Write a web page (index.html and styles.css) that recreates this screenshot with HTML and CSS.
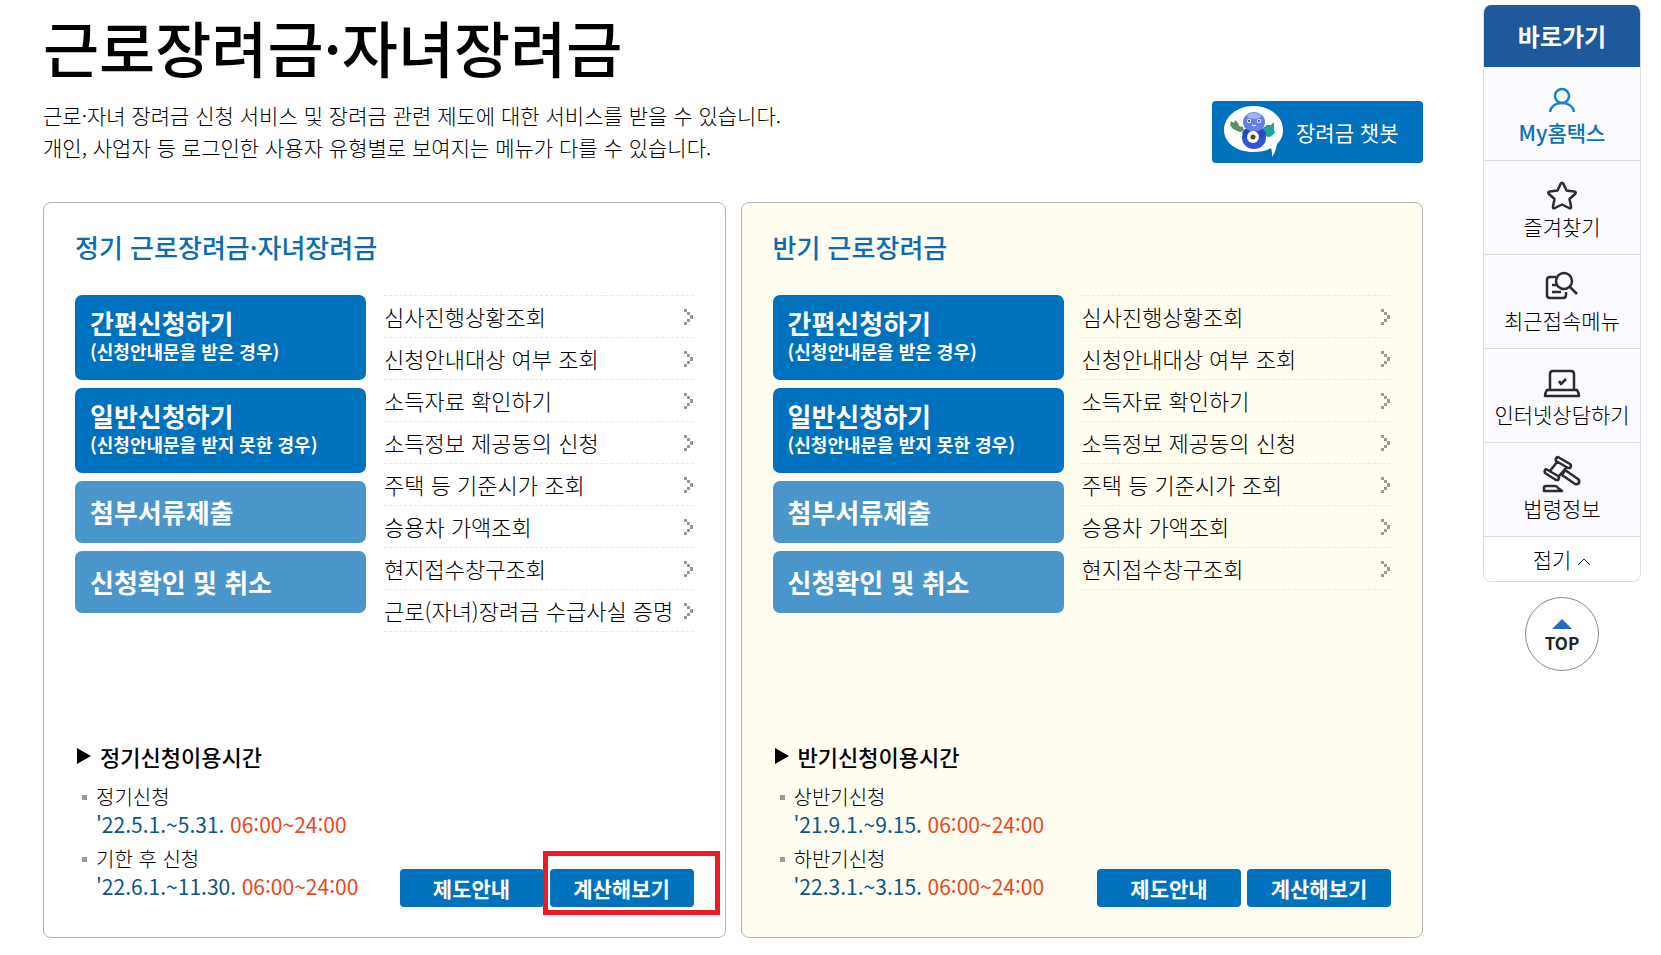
FILE: index.html
```html
<!DOCTYPE html>
<html lang="ko">
<head>
	<meta charset="utf-8">
	<meta name="viewport" content="width=device-width, initial-scale=1">
	<title>근로장려금·자녀장려금</title>
	<link rel="stylesheet" href="styles.css">
</head>
<body>
	<!-- Shared arrow icon -->
	<svg class="defs" width="0" height="0" aria-hidden="true">
		<symbol id="arrow" viewBox="0 0 10 16">
			<path d="M0 0h3v3H0zM3 3h3v3H3zM6 6h3v4H6zM3 10h3v3H3zM0 13h3v3H0z"/>
		</symbol>
	</svg>

	<div class="page">
		<main class="main">
			<h1>근로장려금·자녀장려금</h1>
			<div class="intro">
				<p>근로·자녀 장려금 신청 서비스 및 장려금 관련 제도에 대한 서비스를 받을 수 있습니다.<br>개인, 사업자 등 로그인한 사용자 유형별로 보여지는 메뉴가 다를 수 있습니다.</p>
				<button type="button" class="chatbot-btn">
					<svg width="60" height="52" viewBox="0 0 60 52" aria-hidden="true">
						<path d="M29 0C46 0 59 10 59 24c0 6-2 10-6 14-1 5-2 9-5 13 0-4 0-6-1-9-5 3-11 4-18 4C13 46 0 37 0 24S13 0 29 0z" fill="#fff"/>
						<path d="M7 15l3 2 1-3 3 3 1 3 4 1 1 4-4 1-7-3-3-4z" fill="#5f8f5a"/>
						<path d="M36 24l7-5 4 0 3-3 0 7 1 4-5 4-8-1z" fill="#1fa39a"/>
						<ellipse cx="30" cy="32" rx="12" ry="11" fill="#3252d8"/>
						<path d="M18 27l3-4h18l3 4-4 5H21z" fill="#2947bd"/>
						<ellipse cx="30" cy="16" rx="11" ry="10" fill="#6480e6"/>
						<ellipse cx="30" cy="10" rx="7" ry="3" fill="#9fb2f7"/>
						<circle cx="25" cy="15" r="2" fill="#fff"/>
						<circle cx="35" cy="15" r="2" fill="#fff"/>
						<circle cx="25" cy="15" r="1" fill="#172a80"/>
						<circle cx="35" cy="15" r="1" fill="#172a80"/>
						<path d="M28 19q2 2 4 0" fill="none" stroke="#fff"/>
						<circle cx="29" cy="31" r="6" fill="#fff"/>
						<circle cx="29" cy="31" r="2.500" fill="#5b4330"/>
					</svg>
					장려금 챗봇
				</button>
			</div>

			<div class="panels">
				<section class="panel">
					<h2>정기 근로장려금·자녀장려금</h2>
					<div class="panel-body">
						<div class="apply">
							<button type="button" class="apply-btn">간편신청하기<small>(신청안내문을 받은 경우)</small></button>
							<button type="button" class="apply-btn">일반신청하기<small>(신청안내문을 받지 못한 경우)</small></button>
							<button type="button" class="apply-btn light">첨부서류제출</button>
							<button type="button" class="apply-btn light">신청확인 및 취소</button>
						</div>
						<ul class="links">
							<li><a href="#">심사진행상황조회<svg><use href="#arrow"/></svg></a></li>
							<li><a href="#">신청안내대상 여부 조회<svg><use href="#arrow"/></svg></a></li>
							<li><a href="#">소득자료 확인하기<svg><use href="#arrow"/></svg></a></li>
							<li><a href="#">소득정보 제공동의 신청<svg><use href="#arrow"/></svg></a></li>
							<li><a href="#">주택 등 기준시가 조회<svg><use href="#arrow"/></svg></a></li>
							<li><a href="#">승용차 가액조회<svg><use href="#arrow"/></svg></a></li>
							<li><a href="#">현지접수창구조회<svg><use href="#arrow"/></svg></a></li>
							<li><a href="#">근로(자녀)장려금 수급사실 증명<svg><use href="#arrow"/></svg></a></li>
						</ul>
					</div>
					<div class="panel-foot">
						<div class="times">
							<h3>정기신청이용시간</h3>
							<ul>
								<li>정기신청<br><span class="date">'22.5.1.~5.31.</span> <span class="hour">06:00~24:00</span></li>
								<li>기한 후 신청<br><span class="date">'22.6.1.~11.30.</span> <span class="hour">06:00~24:00</span></li>
							</ul>
						</div>
						<div class="foot-btns">
							<button type="button" class="foot-btn">제도안내</button>
							<button type="button" class="foot-btn marked">계산해보기</button>
						</div>
					</div>
				</section>

				<section class="panel half">
					<h2>반기 근로장려금</h2>
					<div class="panel-body">
						<div class="apply">
							<button type="button" class="apply-btn">간편신청하기<small>(신청안내문을 받은 경우)</small></button>
							<button type="button" class="apply-btn">일반신청하기<small>(신청안내문을 받지 못한 경우)</small></button>
							<button type="button" class="apply-btn light">첨부서류제출</button>
							<button type="button" class="apply-btn light">신청확인 및 취소</button>
						</div>
						<ul class="links">
							<li><a href="#">심사진행상황조회<svg><use href="#arrow"/></svg></a></li>
							<li><a href="#">신청안내대상 여부 조회<svg><use href="#arrow"/></svg></a></li>
							<li><a href="#">소득자료 확인하기<svg><use href="#arrow"/></svg></a></li>
							<li><a href="#">소득정보 제공동의 신청<svg><use href="#arrow"/></svg></a></li>
							<li><a href="#">주택 등 기준시가 조회<svg><use href="#arrow"/></svg></a></li>
							<li><a href="#">승용차 가액조회<svg><use href="#arrow"/></svg></a></li>
							<li><a href="#">현지접수창구조회<svg><use href="#arrow"/></svg></a></li>
						</ul>
					</div>
					<div class="panel-foot">
						<div class="times">
							<h3>반기신청이용시간</h3>
							<ul>
								<li>상반기신청<br><span class="date">'21.9.1.~9.15.</span> <span class="hour">06:00~24:00</span></li>
								<li>하반기신청<br><span class="date">'22.3.1.~3.15.</span> <span class="hour">06:00~24:00</span></li>
							</ul>
						</div>
						<div class="foot-btns">
							<button type="button" class="foot-btn">제도안내</button>
							<button type="button" class="foot-btn">계산해보기</button>
						</div>
					</div>
				</section>
			</div>
		</main>

		<!-- Quick menu -->
		<aside class="side">
			<nav class="quick">
				<h2>바로가기</h2>
				<a href="#" class="quick-item my">
					<svg width="40" height="36" viewBox="0 -3 40 36"><circle cx="20" cy="12" r="7"/><path d="M8 28c1-6 6-9 12-9s11 3 12 9"/></svg>
					My홈택스
				</a>
				<a href="#" class="quick-item">
					<svg width="40" height="36" viewBox="0 -2 40 36"><path d="M18.500 7q1.500-2.500 3 0l3 6.500 7.500 1q3 .500 1 2.500l-5.500 5 1.500 7.500q.500 2.500-2 1.500l-7-3.500-7 3.500q-2.500 1-2-1.500l1.500-7.500-5.500-5q-2-2 1-2.500l7.500-1z"/></svg>
					즐겨찾기
				</a>
				<a href="#" class="quick-item">
					<svg width="40" height="36" viewBox="0 -1 40 36"><path d="M14 7H8q-3 0-3 3v15q0 3 3 3h13q3 0 3-3v-3M10 15h5M10 22h9"/><circle cx="22" cy="11" r="8"/><path d="M28 17l7 7"/></svg>
					최근접속메뉴
				</a>
				<a href="#" class="quick-item">
					<svg width="40" height="36" viewBox="0 -2 40 36"><path d="M8 25V9q0-3 3-3h18q3 0 3 3v16M5 25h30q2 3 2 6H3q0-3 2-6zM17 16l2 3 5-5"/></svg>
					인터넷상담하기
				</a>
				<a href="#" class="quick-item">
					<svg width="40" height="36" viewBox="0 1 40 36"><path d="M16 1l12 7q2 2 0 4h-2L14 5q-1-3 2-4zM4 13l12 7q2 2 0 4h-2L3 17q-1-3 1-4zM15 6l-7 9M24 12l-7 8M23 14l13 9q2 2 1 4-2 2-4 1L20 19zM2 35v-3q0-2 2-2h9q2 0 3 2l4 3z"/></svg>
					법령정보
				</a>
				<button type="button" class="fold-btn">접기 <svg width="14" height="8" viewBox="0 0 14 8"><path d="M1 7l6-6 6 6"/></svg></button>
			</nav>
			<a href="#" class="top-btn"><svg width="20" height="10" viewBox="0 0 20 10"><path d="M10 0l10 10H0z"/></svg>TOP</a>
		</aside>
	</div>
</body>
</html>
```

FILE: styles.css
```css
* {
	box-sizing: border-box;
}
body {
	margin: 0;
	background-color: #fff;
	color: #000;
	font-family: "Noto Sans CJK KR", sans-serif;
	font-weight: 300;
}
h1, h2, h3, p, ul {
	margin: 0;
	padding: 0;
}
ul {
	list-style: none;
}
a {
	color: inherit;
	text-decoration: none;
}
button {
	font-family: inherit;
	border: none;
	cursor: pointer;
}
.defs {
	position: absolute;
}
.page {
	display: flex;
	align-items: flex-start;
	gap: 60px;
	padding: 5px 20px 17px 43px;
}
.main {
	flex: 1;
	min-width: 0;
}
h1 {
	margin-bottom: 10px;
	color: #000;
	font-size: 61px;
	font-weight: 500;
	line-height: 84px;
}
/* Intro text and chatbot button */
.intro {
	display: flex;
	justify-content: space-between;
	align-items: flex-end;
	margin-bottom: 39px;
}
.intro p {
	font-size: 21px;
	line-height: 32px;
}
.chatbot-btn {
	display: flex;
	align-items: center;
	gap: 12px;
	width: 211px;
	height: 62px;
	padding: 0 12px;
	border-radius: 4px;
	background-color: #0071bc;
	color: #fff;
	font-size: 21px;
	font-weight: 400;
	white-space: nowrap;
}
/* Panels */
.panels {
	display: grid;
	grid-template-columns: 1fr 1fr;
	gap: 15px;
}
.panel {
	display: flex;
	flex-direction: column;
	padding: 24px 31px 30px;
	border: 1px solid #b5b5b5;
	border-radius: 8px;
}
.panel.half {
	background-color: #fffdf0;
}
.panel h2 {
	margin-bottom: 28px;
	color: #0f6bb0;
	font-size: 26px;
	font-weight: 500;
	line-height: 40px;
}
.panel-body {
	display: grid;
	grid-template-columns: 291px 1fr;
	gap: 18px;
	margin-bottom: 108px;
}
.apply {
	display: flex;
	flex-direction: column;
	gap: 8px;
}
.apply-btn {
	height: 85px;
	padding: 0 15px 4px;
	border-radius: 7px;
	background-color: #0071bc;
	color: #fff;
	font-size: 26px;
	font-weight: 700;
	line-height: 30px;
	text-align: left;
}
.apply-btn.light {
	height: 62px;
	padding-bottom: 0;
	background-color: #4a96ca;
}
.apply-btn small {
	display: block;
	font-size: 18px;
	line-height: 26px;
}
.links {
	border-top: 1px dashed #e8e8e8;
}
.links li {
	height: 42px;
	border-bottom: 1px dashed #e8e8e8;
}
.links a {
	display: flex;
	justify-content: space-between;
	align-items: center;
	font-size: 22px;
	line-height: 41px;
	white-space: nowrap;
}
.links svg {
	width: 10px;
	height: 16px;
	fill: #999;
}
/* Opening hours */
.panel-foot {
	display: flex;
	justify-content: space-between;
	align-items: flex-end;
	margin-top: auto;
}
.times h3 {
	display: flex;
	align-items: center;
	gap: 9px;
	margin-bottom: 11px;
	color: #000;
	font-size: 22px;
	font-weight: 500;
	line-height: 32px;
}
.times h3::before {
	content: "";
	margin-left: 2px;
	border-left: 14px solid #000;
	border-top: 8px solid transparent;
	border-bottom: 8px solid transparent;
}
.times li {
	position: relative;
	margin-bottom: 6px;
	padding-left: 21px;
	font-size: 20px;
	line-height: 28px;
	white-space: nowrap;
}
.times li::before {
	content: "";
	position: absolute;
	left: 7px;
	top: 12px;
	width: 5px;
	height: 5px;
	background-color: #999;
}
.date, .hour {
	font-size: 21px;
	font-weight: 400;
	line-height: 24px;
}
.date {
	color: #0b5589;
}
.hour {
	color: #e8481c;
}
.foot-btns {
	display: flex;
	gap: 6px;
}
.foot-btn {
	position: relative;
	width: 144px;
	height: 38px;
	padding: 0;
	border-radius: 4px;
	background-color: #0071bc;
	color: #fff;
	font-size: 21px;
	font-weight: 700;
}
/* Red frame around the button */
.foot-btn.marked::after {
	content: "";
	position: absolute;
	top: -18px;
	right: -26px;
	bottom: -8px;
	left: -7px;
	border: 5px solid #ed1c24;
}
/* Quick menu */
.side {
	width: 158px;
}
.quick {
	overflow: hidden;
	border: 1px solid #dcdce0;
	border-top: none;
	border-radius: 8px;
}
.quick h2 {
	margin: 0 -1px;
	background-color: #20589c;
	color: #fff;
	font-size: 24px;
	font-weight: 700;
	line-height: 62px;
	text-align: center;
}
.quick-item {
	display: flex;
	flex-direction: column;
	align-items: center;
	height: 94px;
	padding-top: 14px;
	border-bottom: 1px solid #dcdce0;
	background-color: #fafaff;
	font-size: 21px;
	line-height: 30px;
	white-space: nowrap;
}
.quick-item svg {
	overflow: visible;
	fill: none;
	stroke: #2b2b30;
	stroke-width: 2.500;
	stroke-linejoin: round;
}
.quick-item.my {
	color: #0c72b8;
	font-weight: 500;
}
.quick-item.my svg {
	stroke: #1c80c4;
}
.fold-btn {
	width: 100%;
	height: 44px;
	padding: 0;
	background-color: #fff;
	color: #000;
	font-size: 21px;
	font-weight: 300;
}
.fold-btn svg {
	fill: none;
	stroke: #222;
	vertical-align: 2px;
}
.top-btn {
	display: flex;
	flex-direction: column;
	align-items: center;
	width: 74px;
	height: 74px;
	margin: 15px auto 0;
	padding-top: 21px;
	border: 1px solid #888;
	border-radius: 50%;
	color: #222;
	font-size: 17px;
	font-weight: 700;
	line-height: 28px;
}
.top-btn svg {
	fill: #2b6bc8;
}
```
